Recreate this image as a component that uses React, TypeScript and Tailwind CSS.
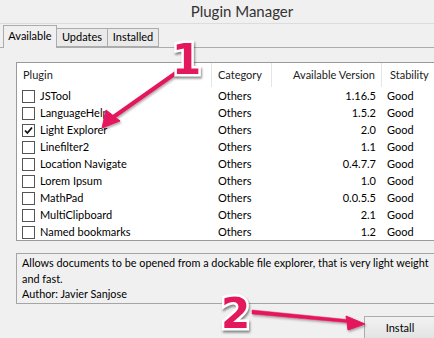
import React from 'react';

type Plugin = { name: string; category: string; version: string; stability: string; checked?: boolean };

const plugins: Plugin[] = [
  { name: 'JSTool', category: 'Others', version: '1.16.5', stability: 'Good' },
  { name: 'LanguageHelp', category: 'Others', version: '1.5.2', stability: 'Good' },
  { name: 'Light Explorer', category: 'Others', version: '2.0', stability: 'Good', checked: true },
  { name: 'Linefilter2', category: 'Others', version: '1.1', stability: 'Good' },
  { name: 'Location Navigate', category: 'Others', version: '0.4.7.7', stability: 'Good' },
  { name: 'Lorem Ipsum', category: 'Others', version: '1.0', stability: 'Good' },
  { name: 'MathPad', category: 'Others', version: '0.0.5.5', stability: 'Good' },
  { name: 'MultiClipboard', category: 'Others', version: '2.1', stability: 'Good' },
  { name: 'Named bookmarks', category: 'Others', version: '1.2', stability: 'Good' },
];

const Checkbox = ({ checked }: { checked?: boolean }) => (
  <div className="w-[13px] h-[13px] border border-[#555] bg-white flex items-center justify-center shrink-0">
    {checked && (
      <svg width="9" height="9" viewBox="0 0 9 9">
        <path d="M1 4.5 L3.4 7 L8 1.5" fill="none" stroke="#111" strokeWidth="1.8" />
      </svg>
    )}
  </div>
);

const Marker = ({ n, className }: { n: string; className: string }) => (
  <div
    className={`absolute text-[42px] leading-none font-bold text-[#e4185d] [font-family:'DejaVu_Sans',sans-serif] [-webkit-text-stroke:5px_white] [paint-order:stroke_fill] drop-shadow-[1px_2px_1px_rgba(0,0,0,0.45)] ${className}`}
  >
    {n}
  </div>
);

export default function App() {
  return (
    <div className="relative w-[434px] h-[338px] overflow-hidden bg-[#f0f0f0] text-[11px] text-black [font-family:'Lato',sans-serif]">
      {/* title bar */}
      <div className="h-[24px] flex items-center justify-center border-b border-[#dcdcdc]">
        <span className="text-[15px] text-[#333] ml-[50px] -mt-[1px]">Plugin Manager</span>
      </div>

      {/* tabs */}
      <div className="h-[24px] flex items-end pl-[3px] border-b border-[#acacac]">
        <div className="h-[23px] w-[54px] -mb-px bg-[#f0f0f0] border border-b-0 border-[#acacac] flex items-center justify-center pb-[2px]">
          Available
        </div>
        <div className="h-[19px] w-[51px] bg-[#eaeaea] border border-l-0 border-[#acacac] flex items-center justify-center">
          Updates
        </div>
        <div className="h-[19px] w-[51px] bg-[#eaeaea] border border-l-0 border-[#acacac] flex items-center justify-center">
          Installed
        </div>
      </div>

      {/* page */}
      <div className="pl-[16px] pt-[14px] flex flex-col w-[436px]">
        <div className="border border-[#9a9a9a] bg-white">
          <div className="h-[24px] flex items-center text-[#222]">
            <div className="w-[194px] pl-[6px] h-full flex items-center">Plugin</div>
            <div className="w-[60px] pl-[6px] h-full flex items-center border-l border-[#e5e5e5]">Category</div>
            <div className="w-[110px] pr-[6px] h-full flex items-center justify-end border-l border-[#e5e5e5]">Available Version</div>
            <div className="flex-1 pl-[8px] h-full flex items-center border-l border-[#e5e5e5]">Stability</div>
          </div>
          {plugins.map((p) => (
            <div key={p.name} className="h-[17px] flex items-center pt-[1px]">
              <div className="w-[194px] pl-[5px] flex items-center gap-[5px]">
                <Checkbox checked={p.checked} />
                <span>{p.name}</span>
              </div>
              <div className="w-[60px] pl-[7px]">{p.category}</div>
              <div className="w-[110px] pr-[5px] text-right">{p.version}</div>
              <div className="flex-1 pl-[6px]">{p.stability}</div>
            </div>
          ))}
        </div>

        <div className="mt-[12px] h-[51px] border border-[#a5a5a5] pl-[5px] pt-[1px] text-[10.85px] leading-[15.5px] whitespace-nowrap">
          <div>Allows documents to be opened from a dockable file explorer, that is very light weight</div>
          <div>and fast.</div>
          <div>Author: Javier Sanjose</div>
        </div>

        <div className="mt-[12px] flex justify-end">
          <div className="w-[72px] h-[24px] border border-[#acacac] bg-gradient-to-b from-[#f2f2f2] to-[#e3e3e3] flex items-center justify-center">
            Install
          </div>
        </div>
      </div>

      {/* annotations */}
      <svg className="absolute inset-0" width="434" height="338" viewBox="0 0 434 338">
        <defs>
          <filter id="sh" x="-20%" y="-20%" width="140%" height="140%">
            <feDropShadow dx="1" dy="1.5" stdDeviation="1" floodColor="#000" floodOpacity="0.35" />
          </filter>
        </defs>
        <g filter="url(#sh)" fill="#e4185d" stroke="#e4185d">
          <line x1="183" y1="68" x2="112" y2="118" strokeWidth="4" strokeLinecap="round" />
          <polygon points="102,128 106,110 120,121" strokeWidth="1" strokeLinejoin="round" />
          <path d="M252 310 L352 320 L352 323 L252 314 Z" strokeWidth="0.5" />
          <polygon points="365,324 346,316 348,330" strokeWidth="1" strokeLinejoin="round" />
        </g>
      </svg>
      <Marker n="1" className="left-[172px] top-[39px]" />
      <Marker n="2" className="left-[221px] top-[293px]" />
    </div>
  );
}
